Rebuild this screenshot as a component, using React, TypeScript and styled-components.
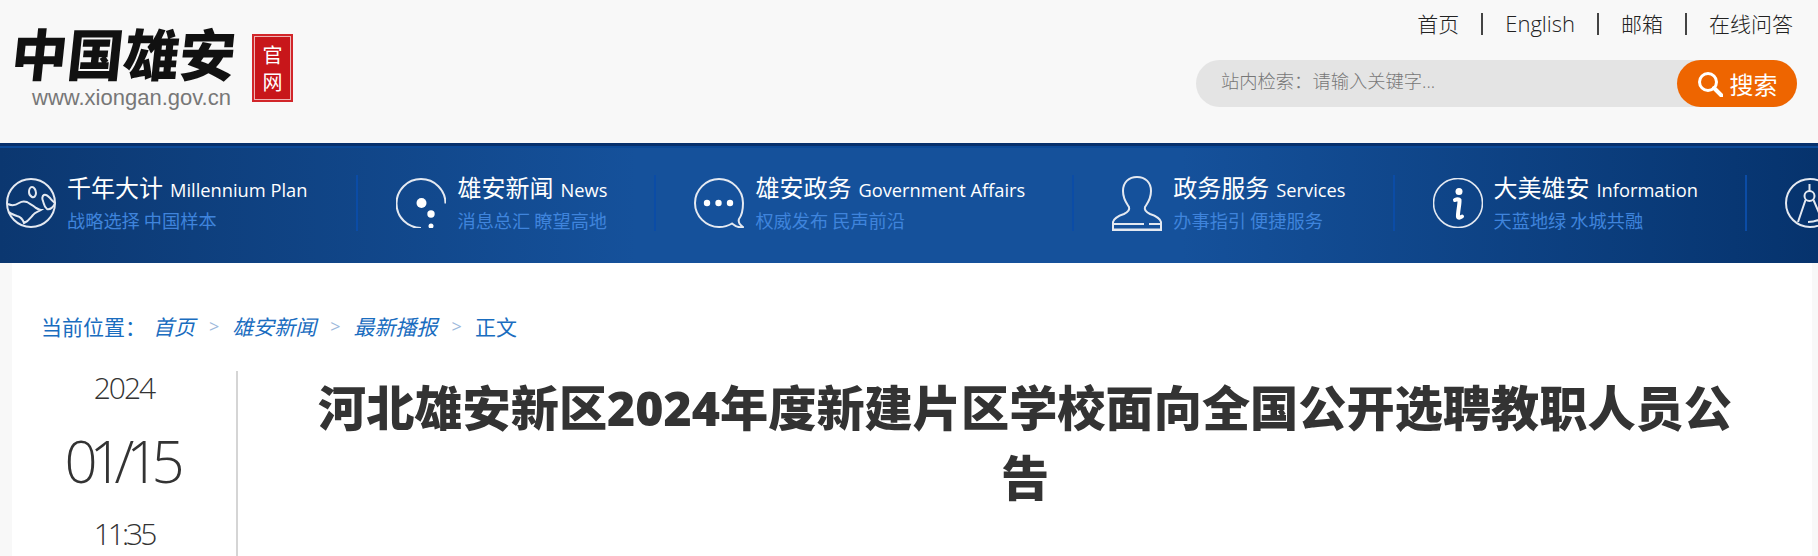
import * as React from 'react';
import styled, { createGlobalStyle } from 'styled-components';

const cjk = '"Noto Sans CJK SC", sans-serif';
const latinCjk = '"Open Sans", "Noto Sans CJK SC", sans-serif';

const GlobalStyle = createGlobalStyle`
  html, body {
    margin: 0;
    padding: 0;
    overflow: hidden;
    background: #f8f8f8;
  }
  * {
    box-sizing: border-box;
  }
`;

const Page = styled.div`
  height: 556px;
  display: flex;
  flex-direction: column;
  overflow: hidden;
  font-family: ${latinCjk};
`;

const Header = styled.header`
  height: 143px;
  flex-shrink: 0;
  display: flex;
  justify-content: space-between;
  padding: 0 21px 0 12px;
`;

const LogoBlock = styled.div`
  display: flex;
  align-items: flex-start;
  gap: 16px;
  padding-top: 17px;
`;

const LogoText = styled.div`
  display: flex;
  flex-direction: column;
`;

const Brand = styled.div`
  font-family: ${cjk};
  font-size: 56px;
  line-height: 70px;
  font-weight: 900;
  color: #111;
  white-space: nowrap;
  transform: skewX(-6deg);
`;

const Domain = styled.div`
  font-family: 'Liberation Sans', sans-serif;
  font-size: 22px;
  line-height: 22px;
  color: #777;
  padding-left: 20px;
  white-space: nowrap;
`;

const Seal = styled.div`
  width: 41px;
  height: 68px;
  margin-top: 17px;
  display: flex;
  flex-direction: column;
  align-items: center;
  justify-content: center;
  background: #c8161a;
  border: 2px solid #d2262a;
  box-shadow: inset 0 0 0 1px #eeb4b4;
  color: #fff;
  font-family: ${cjk};
  font-size: 20px;
  line-height: 27px;
`;

const HeaderRight = styled.div`
  display: flex;
  flex-direction: column;
  align-items: flex-end;
  padding-top: 9px;
`;

const TopLinks = styled.nav`
  display: flex;
  align-items: center;
  height: 28px;
  padding-right: 4px;
  font-weight: 300;
  color: #222;
`;

const TopLink = styled.span<{ $latin?: boolean }>`
  white-space: nowrap;
  font-size: ${p => (p.$latin ? '22px' : '21px')};
`;

const TopDivider = styled.i`
  width: 2px;
  height: 22px;
  margin: 2px 22px 0 22px;
  background: #444;
`;

const SearchBar = styled.div`
  width: 601px;
  height: 47px;
  margin-top: 23px;
  display: flex;
  align-items: center;
  justify-content: space-between;
  border-radius: 24px;
  background: #e4e4e4;
`;

const SearchHint = styled.span`
  padding: 0 0 8px 25px;
  font-size: 18.300px;
  font-weight: 300;
  color: #777;
`;

const SearchButton = styled.button`
  width: 120px;
  height: 47px;
  display: flex;
  align-items: center;
  justify-content: center;
  gap: 7px;
  padding: 0;
  border: none;
  border-radius: 24px;
  background: #ee6500;
  color: #fff;
  font-family: ${cjk};
  font-size: 24px;
`;

const MainNav = styled.nav`
  height: 120px;
  flex-shrink: 0;
  overflow: hidden;
  padding-top: 29px;
  border-top: 3px solid #07306c;
  box-shadow: inset 0 2px 0 #0c4a98;
  background: linear-gradient(90deg, #0b3770 0%, #15519b 35%, #15519b 65%, #06336d 100%);
`;

const NavRow = styled.div`
  display: flex;
  margin-left: -32px;
  width: max-content;
`;

const NavItem = styled.a`
  height: 56px;
  display: flex;
  align-items: center;
  gap: 11px;
  padding: 0 47px 0 38px;
  border-right: 2px solid #0b4ca6;
  &:first-child {
    padding-right: 49px;
  }
  &:last-child {
    border-right: none;
  }
`;

const NavIcon = styled.svg`
  width: 50px;
  flex-shrink: 0;
  fill: none;
  stroke: #e4e9f1;
  stroke-width: 2;
`;

const NavText = styled.div`
  display: flex;
  flex-direction: column;
  gap: 4px;
  white-space: nowrap;
`;

const NavTitle = styled.div`
  display: flex;
  align-items: baseline;
  gap: 7px;
  line-height: 26px;
  color: #fff;
  font-size: 18.300px;
`;

const NavTitleCn = styled.span`
  font-family: ${cjk};
  font-size: 24px;
  font-weight: 400;
`;

const NavSub = styled.div`
  font-family: ${cjk};
  font-size: 18.200px;
  line-height: 26px;
  font-weight: 400;
  color: #3f84dc;
`;

const Card = styled.main`
  flex: 1;
  margin: 0 6px 0 12px;
  background: #fff;
  display: flex;
  flex-direction: column;
  min-height: 0;
`;

const Crumbs = styled.div`
  display: flex;
  align-items: center;
  height: 30px;
  margin: 48px 0 30px 29px;
  font-size: 21px;
  font-weight: 400;
  color: #1a6dbf;
`;

const CrumbLabel = styled.span`
  margin-right: 7px;
`;

const CrumbLink = styled.span`
  font-style: italic;
`;

const CrumbArrow = styled.span`
  margin: 0 13px 0 14px;
  font-size: 18px;
  color: #9db9dc;
`;

const Article = styled.div`
  flex: 1;
  display: flex;
  min-height: 0;
`;

const DateColumn = styled.aside`
  width: 226px;
  flex-shrink: 0;
  border-right: 2px solid #d5d5d5;
  text-align: center;
  color: #333;
  font-family: 'Open Sans', sans-serif;
  font-weight: 300;
`;

const DateSmall = styled.div<{ $tight?: boolean }>`
  font-size: 30px;
  line-height: 34px;
  letter-spacing: ${p => (p.$tight ? '-3px' : '-2px')};
`;

const DateBig = styled.div`
  font-size: 58px;
  line-height: 112px;
  letter-spacing: -8px;
  padding-right: 7px;
`;

const Title = styled.h1`
  flex: 1;
  margin: 0;
  padding: 1px 70px 0;
  text-align: center;
  font-family: 'Noto Sans', ${cjk};
  font-size: 48.200px;
  line-height: 70px;
  font-weight: 900;
  color: #333;
`;

function GlobeIcon() {
  return (
    <NavIcon viewBox="0 0 50 50" height="50">
      <circle cx="25" cy="25" r="24" />
      <path d="M2 26c4 2 8 1 11-1s5-2 8-1c3 2 6 3 9 6 2 1 4 2 5 2-3 2-6 2-8 5-2 2-4 6-9 8-1-3-3-6-7-7-3-1-6-2-8-4" />
      <path d="M26 9c2 0 4 3 4 6s-2 5-4 4-3-3-3-5 1-5 3-5z" />
      <path d="M38 17c-2 1-2 4-1 6 1 3 1 6 4 8 3 1 7-2 8-6-2-2-4-3-5-5-2-2-4-4-6-3z" />
    </NavIcon>
  );
}

function BubblesIcon() {
  return (
    <NavIcon viewBox="0 0 50 50" height="50">
      <path d="M25 50A24.500 24.500 0 1 1 49.500 25.500" />
      <circle cx="25.500" cy="25" r="5" fill="#fff" stroke="none" />
      <circle cx="35" cy="36" r="3.700" fill="#fff" stroke="none" />
      <circle cx="35" cy="48" r="2.500" fill="#fff" stroke="none" />
    </NavIcon>
  );
}

function ChatIcon() {
  return (
    <NavIcon viewBox="0 0 50 50" height="50">
      <path d="M38 45.500C34 48 30 49 25 49 12 49 1 38 1 25S12 1 25 1s24 11 24 24c0 6-1 12-4 16-1 3 1 6 4 8-4 1-8-1-11-3.500z" />
      <circle cx="13" cy="25" r="3.200" fill="#fff" stroke="none" />
      <circle cx="24.500" cy="25" r="3.200" fill="#fff" stroke="none" />
      <circle cx="36" cy="25" r="3.200" fill="#fff" stroke="none" />
    </NavIcon>
  );
}

function StampIcon() {
  return (
    <NavIcon viewBox="0 0 50 55" height="55">
      <path d="M1 54V46c1-4 5-6 11-8 4-2 6-4 5-7-1-2-6-7-6-16C11 6 17 1 25 1s14 5 14 14c0 9-5 14-6 16-1 3 1 5 5 7 6 2 10 4 11 8v8" />
      <path d="M1 48h31M37 48h12" />
      <path d="M0 54h50" strokeWidth="3" />
    </NavIcon>
  );
}

function InfoIcon() {
  return (
    <NavIcon viewBox="0 0 50 50" height="50">
      <circle cx="25" cy="25" r="24.500" strokeWidth="1.600" />
      <circle cx="26" cy="13.500" r="3.500" fill="#fff" stroke="none" />
      <path d="M22 22c2-1 4-1 4.500 0 .5 3-2 13-1.500 17 0 1 2 1 4-.5" strokeWidth="4" stroke="#fff" strokeLinecap="round" />
    </NavIcon>
  );
}

function CompassIcon() {
  return (
    <NavIcon viewBox="0 0 50 50" height="50">
      <circle cx="25" cy="25" r="24" />
      <circle cx="24.500" cy="18" r="5" />
      <path d="M24.500 6v7M20.500 22L13 44M28.500 22L38 44M23 44c6 0 12-2 17-6" />
    </NavIcon>
  );
}

const navItems = [
  { cn: '千年大计', en: 'Millennium Plan', sub: '战略选择 中国样本', icon: <GlobeIcon /> },
  { cn: '雄安新闻', en: 'News', sub: '消息总汇 瞭望高地', icon: <BubblesIcon /> },
  { cn: '雄安政务', en: 'Government Affairs', sub: '权威发布 民声前沿', icon: <ChatIcon /> },
  { cn: '政务服务', en: 'Services', sub: '办事指引 便捷服务', icon: <StampIcon /> },
  { cn: '大美雄安', en: 'Information', sub: '天蓝地绿 水城共融', icon: <InfoIcon /> },
  { cn: '', en: '', sub: '', icon: <CompassIcon /> },
];

const topLinks = ['首页', 'English', '邮箱', '在线问答'];
const crumbs = ['首页', '雄安新闻', '最新播报'];

export default function App() {
  return (
    <Page>
      <GlobalStyle />
      <Header>
        <LogoBlock>
          <LogoText>
            <Brand>中国雄安</Brand>
            <Domain>www.xiongan.gov.cn</Domain>
          </LogoText>
          <Seal>
            <span>官</span>
            <span>网</span>
          </Seal>
        </LogoBlock>
        <HeaderRight>
          <TopLinks>
            {topLinks.map((link, i) => (
              <React.Fragment key={link}>
                {i > 0 && <TopDivider />}
                <TopLink $latin={link === 'English'}>{link}</TopLink>
              </React.Fragment>
            ))}
          </TopLinks>
          <SearchBar>
            <SearchHint>站内检索：请输入关键字...</SearchHint>
            <SearchButton>
              <svg width="26" height="26" viewBox="0 0 26 26" fill="none" stroke="#fff" strokeWidth="3">
                <circle cx="11" cy="11" r="8.500" />
                <path d="M17 17l7.500 7.500" strokeLinecap="round" strokeWidth="4" />
              </svg>
              搜索
            </SearchButton>
          </SearchBar>
        </HeaderRight>
      </Header>

      <MainNav>
        <NavRow>
          {navItems.map((item, i) => (
            <NavItem key={i}>
              {item.icon}
              <NavText>
                <NavTitle>
                  <NavTitleCn>{item.cn}</NavTitleCn>
                  <span>{item.en}</span>
                </NavTitle>
                <NavSub>{item.sub}</NavSub>
              </NavText>
            </NavItem>
          ))}
        </NavRow>
      </MainNav>

      <Card>
        <Crumbs>
          <CrumbLabel>当前位置：</CrumbLabel>
          {crumbs.map(crumb => (
            <React.Fragment key={crumb}>
              <CrumbLink>{crumb}</CrumbLink>
              <CrumbArrow>&gt;</CrumbArrow>
            </React.Fragment>
          ))}
          <span>正文</span>
        </Crumbs>
        <Article>
          <DateColumn>
            <DateSmall>2024</DateSmall>
            <DateBig>01/15</DateBig>
            <DateSmall $tight>11:35</DateSmall>
          </DateColumn>
          <Title>河北雄安新区2024年度新建片区学校面向全国公开选聘教职人员公告</Title>
        </Article>
      </Card>
    </Page>
  );
}
